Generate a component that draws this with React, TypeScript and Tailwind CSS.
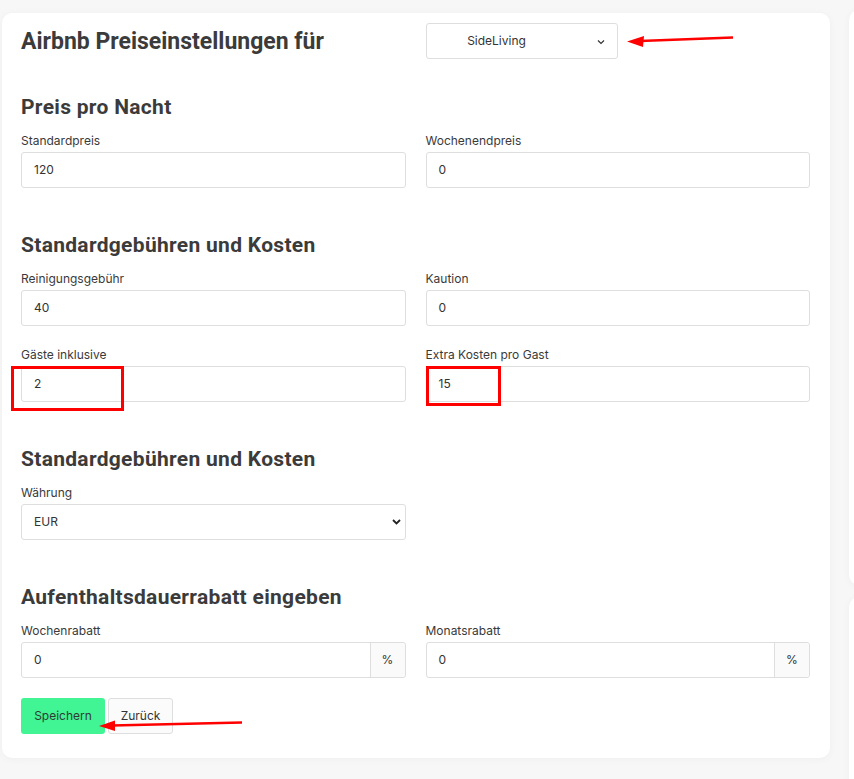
import React from "react";

const lbl = "text-[12px] leading-[16px] text-[#3a3a3a] mb-[3px]";
const inp = "h-[36px] w-full border border-[#dedede] rounded-[3px] bg-white px-[12px] flex items-center text-[12px] text-[#333]";
const h2 = "text-[21px] font-bold text-[#3b3b3b] leading-[24px] tracking-[0.3px]";
const headFont = { fontFamily: "Roboto, sans-serif" };

function Field({ label, value }: { label: string; value: string }) {
  return (
    <div className="flex flex-col">
      <div className={lbl}>{label}</div>
      <div className={inp}>{value}</div>
    </div>
  );
}

function PctField({ label, value }: { label: string; value: string }) {
  return (
    <div className="flex flex-col">
      <div className={lbl}>{label}</div>
      <div className="h-[36px] w-full border border-[#dedede] rounded-[3px] bg-white flex text-[12px] text-[#333]">
        <div className="flex-1 flex items-center px-[12px]">{value}</div>
        <div className="w-[35px] border-l border-[#dedede] bg-[#fafafa] flex items-center justify-center rounded-r-[3px]">%</div>
      </div>
    </div>
  );
}

export default function App() {
  return (
    <div
      className="min-h-[779px] w-[854px] overflow-hidden bg-[#f7f7f7] relative"
      style={{ fontFamily: "Inter, 'Noto Sans', sans-serif" }}
    >
      <div className="flex items-start gap-[19px] pt-[13px] pl-[2px]">
        <div className="w-[828px] shrink-0 bg-white rounded-[10px] shadow-[0_1px_8px_rgba(0,0,0,0.04)] pl-[19px] pr-[20px] pb-[24px]">
          <div className="grid grid-cols-2 gap-x-[20px] pt-[10px]">
            <div className="text-[23px] font-bold text-[#3b3b3b] leading-[36px] pt-[1px]" style={headFont}>
              Airbnb Preiseinstellungen für
            </div>
            <div className="w-[192px] h-[36px] border border-[#dedede] rounded-[3px] flex items-center text-[12px] text-[#333] relative pr-[50px]">
              <span className="flex-1 text-center">SideLiving</span>
              <svg className="absolute left-[170px] top-[15px]" width="8" height="6" viewBox="0 0 8 6">
                <path d="M1 1.5 L4 4.5 L7 1.5" stroke="#333" strokeWidth="1.2" fill="none" />
              </svg>
            </div>
          </div>

          <div className="mt-[35px]" style={headFont}>
            <div className={h2}>Preis pro Nacht</div>
          </div>
          <div className="grid grid-cols-2 gap-x-[20px] mt-[14px]">
            <Field label="Standardpreis" value="120" />
            <Field label="Wochenendpreis" value="0" />
          </div>

          <div className="mt-[45px]" style={headFont}>
            <div className={h2}>Standardgebühren und Kosten</div>
          </div>
          <div className="grid grid-cols-2 gap-x-[20px] gap-y-[21px] mt-[14px]">
            <Field label="Reinigungsgebühr" value="40" />
            <Field label="Kaution" value="0" />
            <Field label="Gäste inklusive" value="2" />
            <Field label="Extra Kosten pro Gast" value="15" />
          </div>

          <div className="mt-[45px]" style={headFont}>
            <div className={h2}>Standardgebühren und Kosten</div>
          </div>
          <div className="grid grid-cols-2 gap-x-[20px] mt-[14px]">
            <div className="flex flex-col">
              <div className={lbl}>Währung</div>
              <div className={inp + " justify-between pr-[4px]"}>
                <span>EUR</span>
                <svg width="9" height="6" viewBox="0 0 9 6">
                  <path d="M1 1 L4.5 4.5 L8 1" stroke="#222" strokeWidth="1.8" fill="none" />
                </svg>
              </div>
            </div>
          </div>

          <div className="mt-[45px]" style={headFont}>
            <div className={h2}>Aufenthaltsdauerrabatt eingeben</div>
          </div>
          <div className="grid grid-cols-2 gap-x-[20px] mt-[14px]">
            <PctField label="Wochenrabatt" value="0" />
            <PctField label="Monatsrabatt" value="0" />
          </div>

          <div className="flex gap-[3px] mt-[20px]">
            <button className="h-[36px] w-[84px] rounded-[3px] bg-[#41f595] text-[12px] text-[#2f3a34]">Speichern</button>
            <button className="h-[36px] w-[65px] rounded-[3px] border border-[#dedede] bg-[#fbfbfb] text-[12px] text-[#333]">Zurück</button>
          </div>
        </div>

        <div className="w-[300px] shrink-0 flex flex-col gap-[12px] -mt-[3px]">
          <div className="h-[575px] bg-white rounded-[10px] shadow-[0_1px_8px_rgba(0,0,0,0.04)]" />
          <div className="h-[200px] bg-white rounded-[10px] shadow-[0_1px_8px_rgba(0,0,0,0.04)]" />
        </div>
      </div>

      <svg className="absolute inset-0 pointer-events-none" width="854" height="779" viewBox="0 0 854 779">
        <line x1="733" y1="37.5" x2="640" y2="41" stroke="#f00" strokeWidth="2.5" />
        <polygon points="627,41.5 644,36 643,47" fill="#f00" />
        <rect x="12.5" y="367.5" width="110" height="42" fill="none" stroke="#f00" strokeWidth="3" />
        <rect x="427.5" y="367.5" width="72" height="37" fill="none" stroke="#f00" strokeWidth="3" />
        <line x1="242" y1="722.5" x2="112" y2="725.5" stroke="#f00" strokeWidth="2.5" />
        <polygon points="99,726 115,720.5 115,731" fill="#f00" />
      </svg>
    </div>
  );
}
